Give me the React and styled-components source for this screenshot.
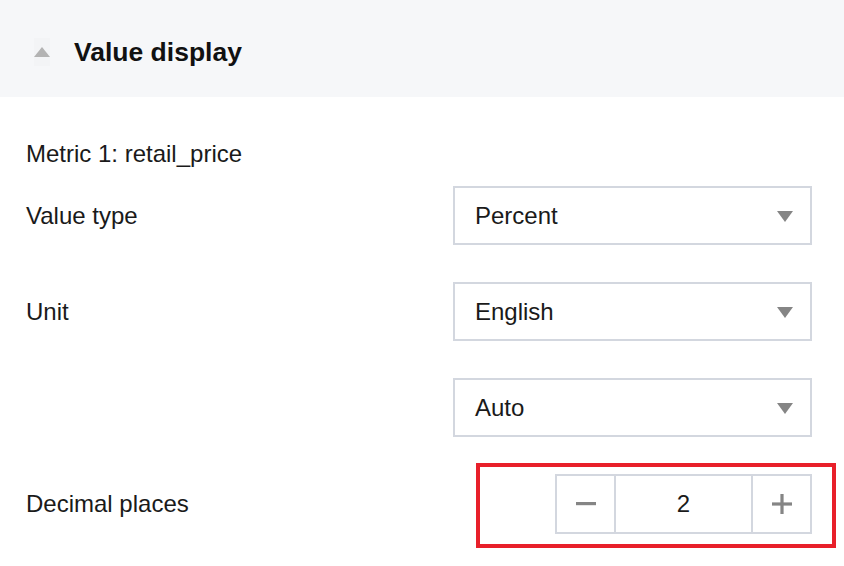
import React, { useState } from 'react';
import styled, { createGlobalStyle } from 'styled-components';

const GlobalStyle = createGlobalStyle`
    html, body {
        margin: 0;
        padding: 0;
        background: #ffffff;
        font-family: "Liberation Sans", Arial, Helvetica, sans-serif;
        color: #1a1a1a;
    }
`;

const Panel = styled.div`
    width: 844px;
    height: 566px;
    overflow: hidden;
    background: #ffffff;
`;

const Header = styled.div`
    height: 97px;
    display: flex;
    align-items: center;
    background: #f6f7f9;
    padding-left: 34px;
    box-sizing: border-box;
`;

const Toggle = styled.button`
    width: 16px;
    height: 28px;
    padding: 0;
    border: none;
    background: #f3f4f6;
    display: flex;
    align-items: center;
    justify-content: center;
    margin-right: 24px;
    margin-top: 6px;
`;

const Title = styled.h2`
    margin: 8px 0 0 0;
    font-size: 26.5px;
    font-weight: 700;
    color: #111111;
`;

const Body = styled.div`
    padding: 44px 32px 0 26px;
`;

const Metric = styled.div`
    font-size: 24px;
    line-height: 26px;
    height: 26px;
    margin-bottom: 19px;
`;

const Row = styled.div`
    display: grid;
    grid-template-columns: 1fr 359px;
    align-items: center;
    height: 59px;
    margin-bottom: 37px;
    position: relative;
`;

const Label = styled.span`
    font-size: 24px;
`;

const Select = styled.div`
    grid-column: 2;
    height: 59px;
    box-sizing: border-box;
    border: 2px solid #d3d7df;
    display: flex;
    align-items: center;
    justify-content: space-between;
    padding: 0 17px 0 20px;
    font-size: 24px;
    background: #ffffff;
`;

const Caret = styled.span`
    width: 0;
    height: 0;
    border-left: 8px solid transparent;
    border-right: 8px solid transparent;
    border-top: 11px solid #858585;
    margin-top: 2px;
`;

const Stepper = styled.div`
    grid-column: 2;
    justify-self: end;
    width: 257px;
    height: 60px;
    box-sizing: border-box;
    border: 2px solid #d3d7df;
    display: grid;
    grid-template-columns: 59px 1fr 59px;
    position: relative;
`;

const StepButton = styled.button`
    border: none;
    background: #ffffff;
    padding: 0;
    display: flex;
    align-items: center;
    justify-content: center;
    border-left: ${p => (p.$side === 'right' ? '2px solid #d3d7df' : 'none')};
    border-right: ${p => (p.$side === 'left' ? '2px solid #d3d7df' : 'none')};
`;

const StepValue = styled.div`
    display: flex;
    align-items: center;
    justify-content: center;
    font-size: 24px;
`;

const Highlight = styled.div`
    position: absolute;
    left: -81px;
    right: -26px;
    top: -13px;
    bottom: -16px;
    border: 4px solid #e8202a;
    pointer-events: none;
`;

function Minus() {
    return (
        <svg width="20" height="4" viewBox="0 0 20 4">
            <rect x="0" y="0" width="20" height="3.2" fill="#858585" />
        </svg>
    );
}

function Plus() {
    return (
        <svg width="20" height="20" viewBox="0 0 20 20">
            <rect x="0" y="8.4" width="20" height="3.2" fill="#858585" />
            <rect x="8.4" y="0" width="3.2" height="20" fill="#858585" />
        </svg>
    );
}

function SelectField({ value }) {
    return (
        <Select>
            <span>{value}</span>
            <Caret />
        </Select>
    );
}

export default function App() {
    const [places, setPlaces] = useState(2);

    return (
        <>
            <GlobalStyle />
            <Panel>
                <Header>
                    <Toggle aria-label='collapse'>
                        <svg width="16" height="10" viewBox="0 0 16 10">
                            <polygon points="8,0 16,10 0,10" fill="#b3b3b3" />
                        </svg>
                    </Toggle>
                    <Title>Value display</Title>
                </Header>
                <Body>
                    <Metric>Metric 1: retail_price</Metric>
                    <Row>
                        <Label>Value type</Label>
                        <SelectField value='Percent' />
                    </Row>
                    <Row>
                        <Label>Unit</Label>
                        <SelectField value='English' />
                    </Row>
                    <Row>
                        <SelectField value='Auto' />
                    </Row>
                    <Row>
                        <Label>Decimal places</Label>
                        <Stepper>
                            <StepButton $side='left' onClick={() => setPlaces(Math.max(0, places - 1))}>
                                <Minus />
                            </StepButton>
                            <StepValue>{places}</StepValue>
                            <StepButton $side='right' onClick={() => setPlaces(places + 1)}>
                                <Plus />
                            </StepButton>
                            <Highlight />
                        </Stepper>
                    </Row>
                </Body>
            </Panel>
        </>
    );
}
